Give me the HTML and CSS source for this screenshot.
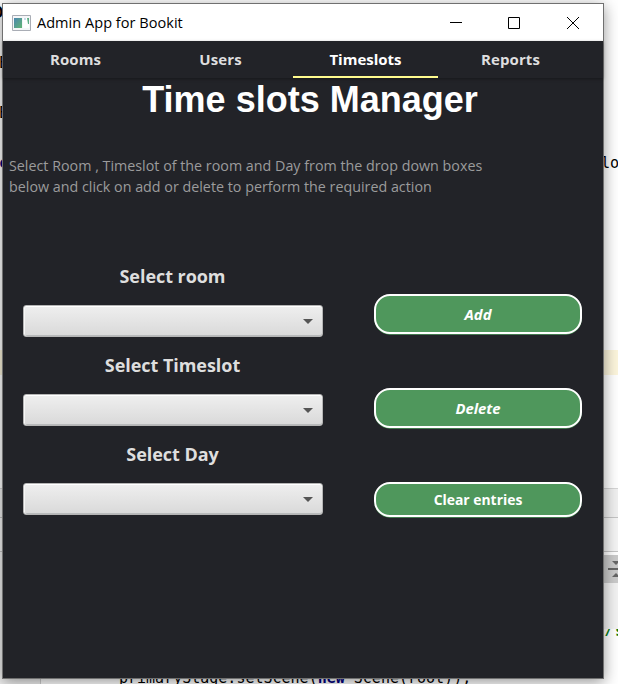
FILE: index.html
```html
<!DOCTYPE html>
<html lang="en">
<head>
<meta charset="utf-8">
<title>Admin App for Bookit</title>
<link rel="stylesheet" href="styles.css">
</head>
<body>
<div class="desktop">
  <div class="band band-line"></div>
  <div class="band band-panel"></div>
  <div class="band band-bar"></div>
  <div class="band band-tool"></div>
  <div class="band band-edge"></div>
  <div class="band band-foot"></div>
  <span class="code c1">D</span>
  <span class="code c2">E</span>
  <span class="code c3">E</span>
  <span class="code c4">c</span>
  <span class="code c5">lo</span>
  <span class="code c6">/s</span>
  <span class="code c7">primaryStage.setScene(<b>new</b> Scene(root));</span>
  <svg class="split" width="10" height="18" viewBox="0 0 10 18"><path d="M0 8h10v2H0zM4 1h8L8 5zM4 17h8L8 13z" fill="#666"/></svg>

  <main class="window">
    <header class="titlebar">
      <svg class="app-icon" width="19" height="16" viewBox="0 0 19 16">
        <defs><linearGradient id="g" x1="0" y1="0" x2="1" y2="1"><stop offset="0" stop-color="#4a86b0"/><stop offset="1" stop-color="#62b573"/></linearGradient></defs>
        <path d="M.5.5h18v15H.5z" fill="#f5f6f8" stroke="#a9adb5"/>
        <path d="M2 3h8v10H2z" fill="url(#g)"/>
        <path d="M11 3h6v10h-6z" fill="#fff"/><path d="M12 3h2v2h-2z" fill="#c9dceb"/><path d="M15 3h2v6h-1z" fill="#5fae86"/>
      </svg>
      <span class="caption">Admin App for Bookit</span>
      <svg class="controls" width="130" height="14" viewBox="0 0 130 14">
        <g fill="none" stroke="#000"><path d="M0 6.500h12M58.500 1.500h11v11h-11zM117 1l12 12M129 1l-12 12"/></g>
      </svg>
    </header>
    <nav class="tabs">
      <span class="tab">Rooms</span>
      <span class="tab">Users</span>
      <span class="tab active">Timeslots</span>
      <span class="tab">Reports</span>
    </nav>
    <h1>Time slots Manager</h1>
    <p class="hint">Select Room , Timeslot of the room and Day from the drop down boxes<br>below and click on add or delete to perform the required action</p>
    <section class="form">
      <div class="fields">
        <label>Select room</label>
        <div class="combo"><i></i></div>
        <label>Select Timeslot</label>
        <div class="combo"><i></i></div>
        <label>Select Day</label>
        <div class="combo"><i></i></div>
      </div>
      <div class="actions">
        <button class="slanted">Add</button>
        <button class="slanted">Delete</button>
        <button class="short">Clear entries</button>
      </div>
    </section>
  </main>
</div>
</body>
</html>
```
FILE: styles.css
```css
* { box-sizing: border-box; }
body { margin: 0; font-family: "Open Sans", sans-serif; }
.desktop { position: relative; width: 618px; height: 684px; overflow: hidden; background: #fff; }
.band { position: absolute; left: 0; width: 100%; }
.band-line { top: 350px; height: 25px; background: #fcf5dc; }
.band-panel { top: 488px; height: 30px; background: #f0f0f0; border-top: 1px solid #d5d5d5; border-bottom: 1px solid #c4c4c4; }
.band-bar { top: 518px; height: 34px; background: #f4f4f4; border-bottom: 1px solid #c4c4c4; }
.band-tool { left: 300px; top: 555px; height: 28px; background: #cacaca; }
.band-edge { top: 583px; height: 46px; background: #f2f2f2; }
.band-foot { top: 552px; height: 132px; width: 41px; background: #f0f0f0; border-right: 1px solid #d0d0d0; }
.code { position: absolute; font: 15.100px/18px "DejaVu Sans Mono", monospace; white-space: pre; color: #000; }
.c1 { left: -6px; top: 4px; font-weight: bold; }
.c2 { left: -1px; top: 54px; }
.c3 { left: -1px; top: 104px; }
.c4 { left: -1px; top: 154px; color: #000080; font-weight: bold; }
.c5 { left: 601px; top: 154px; }
.c6 { left: 604px; top: 629px; height: 7px; line-height: 4px; overflow: hidden; letter-spacing: 2px; color: #067d17; font-weight: bold; }
.c7 { left: 119px; top: 669px; font-size: 15px; }
.c7 b { color: #000080; }
.split { position: absolute; left: 608px; top: 560px; }
.window {
  position: absolute; left: 2px; top: 3px; width: 602px; height: 676px;
  border: 1px solid #707070; background: #222328;
  box-shadow: 0 3px 14px rgba(0, 0, 0, .42);
}
.titlebar { display: flex; align-items: center; height: 37px; padding: 0 23px 0 9px; background: #fff; color: #000; }
.caption { margin-left: 6px; font-size: 14.500px; line-height: 20px; letter-spacing: .04px; white-space: nowrap; }
.controls { margin-left: auto; }
.tabs { display: flex; height: 37px; padding-right: 20px; box-shadow: 0 1px 3px rgba(0, 0, 0, .35); }
.tab { flex: 1; height: 37px; text-align: center; font-size: 15px; line-height: 37px; font-weight: 700; letter-spacing: .1px; color: #dededf; }
.tab.active { color: #fff; border-bottom: 2px solid #fffb8e; letter-spacing: 0; }
h1 { margin: 0; padding-left: 14px; height: 43px; font: bold 36px/43px "Liberation Sans", sans-serif; text-align: center; color: #fff; white-space: nowrap; }
.hint { margin: 34px 0 0; padding-left: 6px; height: 42px; font-size: 14.300px; line-height: 21px; color: #9b9b9c; white-space: nowrap; }
.form { display: flex; gap: 51px; margin-top: 67px; padding-left: 20px; }
.fields { width: 300px; }
label { display: block; height: 24px; margin-bottom: 17px; padding-right: 1px; font-size: 18px; line-height: 24px; font-weight: 700; letter-spacing: -.05px; text-align: center; color: #dedede; }
.combo {
  display: flex; align-items: center; justify-content: flex-end; height: 32px; margin-bottom: 16px; padding-right: 9px;
  border: 1px solid #b5b5b5; border-radius: 3px;
  background: linear-gradient(#efefef, #d9d9d9); box-shadow: inset 0 1px #fff, inset 1px 0 #f7f7f7, inset 0 -1px #b8babb;
}
.combo i { border: 5px solid transparent; border-top-color: #555; border-bottom: 0; }
.actions { display: flex; flex-direction: column; gap: 54px; width: 208px; margin-top: 30px; }
button {
  height: 40px; padding: 0; border: 2px solid #fff; border-radius: 16px;
  background: #4f975c; color: #fff; font: 700 14px/20px "Open Sans", sans-serif; box-shadow: 0 1px 0 -0.300px #4f975c;
}
.slanted { font-size: 14.800px; font-style: italic; }
.short { height: 35px; font-size: 13.900px; }
```
